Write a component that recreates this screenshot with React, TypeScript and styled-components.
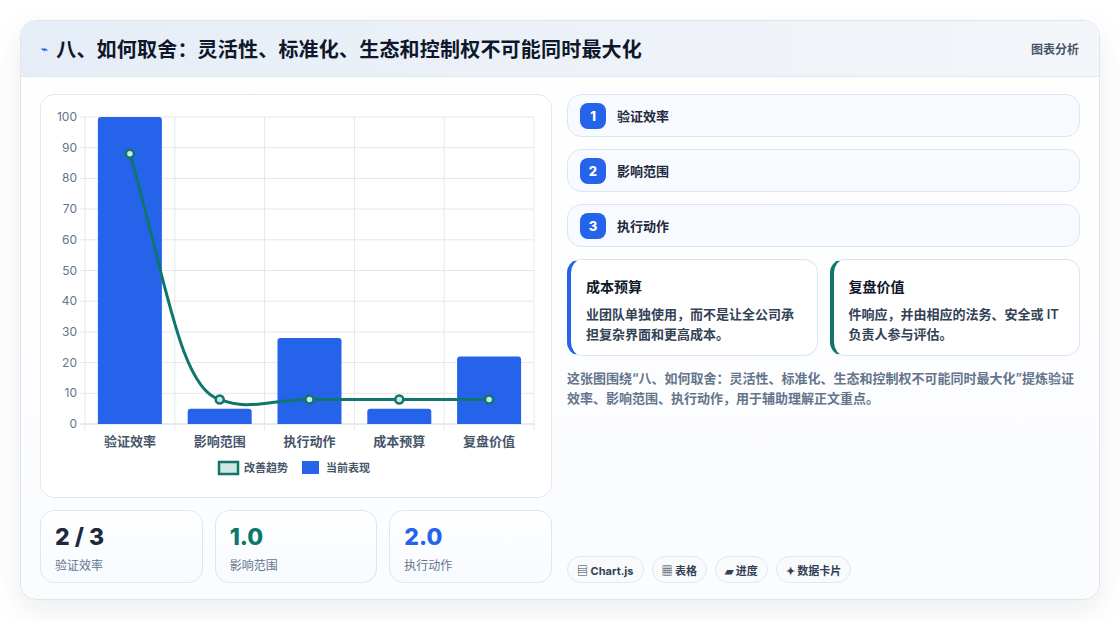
import styled, { createGlobalStyle } from 'styled-components';

const Global = createGlobalStyle`
  html, body { margin: 0; padding: 0; background: #ffffff; }
  body { font-family: Inter, "Noto Sans CJK SC", sans-serif; color: #0f172a; }
  * { box-sizing: border-box; }
`;

const Page = styled.div`
  width: 1120px;
  height: 620px;
  padding: 20px;
`;

const Card = styled.div`
  width: 1080px;
  height: 580px;
  border: 1px solid #dfe5ee;
  border-radius: 16px;
  background: linear-gradient(180deg, #ffffff, #fbfcfe);
  box-shadow: 0 10px 30px rgba(15, 23, 42, 0.08);
  overflow: hidden;
  display: flex;
  flex-direction: column;
`;

const Header = styled.div`
  height: 56px;
  flex-shrink: 0;
  display: flex;
  align-items: center;
  justify-content: space-between;
  padding: 0 20px;
  background: linear-gradient(90deg, #e6edf6, #f3f6fa);
  border-bottom: 1px solid #e2e8f0;
`;

const Title = styled.h1`
  margin: 0;
  font-size: 20px;
  font-weight: 700;
  color: #0f172a;
  display: flex;
  align-items: center;
  gap: 8px;
  letter-spacing: 0.2px;
`;

const Bolt = styled.span`
  color: #2563eb;
  font-size: 11px;
`;

const HeaderTag = styled.span`
  font-size: 12px;
  color: #475569;
  font-weight: 600;
`;

const Body = styled.div`
  flex: 1;
  display: grid;
  grid-template-columns: 512px 513px;
  gap: 15px;
  padding: 17px 19px 19px 19px;
`;

const Col = styled.div`
  display: flex;
  flex-direction: column;
  gap: 12px;
`;

const ChartCard = styled.div`
  height: 404px;
  border: 1px solid #e2e8f0;
  border-radius: 14px;
  background: #fff;
`;

const StatRow = styled.div`
  display: grid;
  grid-template-columns: repeat(3, 1fr);
  gap: 12px;
`;

const Stat = styled.div`
  height: 73px;
  border: 1px solid #dde6f2;
  border-radius: 14px;
  background: linear-gradient(180deg, #ffffff, #f7faff);
  padding: 12px 14px;
`;

const StatValue = styled.div<{ $color: string }>`
  font-size: 23px;
  font-weight: 800;
  color: ${p => p.$color};
  line-height: 28px;
`;

const StatLabel = styled.div`
  font-size: 12px;
  color: #64748b;
  margin-top: 5px;
`;

const Item = styled.div`
  height: 43px;
  border: 1px solid #dbe6f5;
  border-radius: 14px;
  background: #f7faff;
  display: flex;
  align-items: center;
  gap: 11px;
  padding: 0 12px;
  font-size: 13px;
  font-weight: 600;
  color: #1e293b;
`;

const Num = styled.span`
  width: 26px;
  height: 26px;
  border-radius: 8px;
  background: #2563eb;
  color: #fff;
  font-size: 13px;
  font-weight: 800;
  display: flex;
  align-items: center;
  justify-content: center;
`;

const InfoRow = styled.div`
  display: grid;
  grid-template-columns: 1fr 1fr;
  gap: 12px;
`;

const Info = styled.div<{ $accent: string }>`
  height: 97px;
  border: 1px solid #dbe6f5;
  border-left: 4px solid ${p => p.$accent};
  border-radius: 14px;
  background: #fff;
  padding: 16px 16px 0 15px;
`;

const InfoTitle = styled.div`
  font-size: 14px;
  font-weight: 700;
  color: #0f172a;
  margin-bottom: 8px;
`;

const InfoText = styled.div`
  font-size: 13px;
  font-weight: 600;
  line-height: 20px;
  color: #334155;
`;

const Summary = styled.p`
  margin: 0;
  font-size: 13px;
  font-weight: 600;
  line-height: 20px;
  color: #64748b;
`;

const Tags = styled.div`
  margin-top: auto;
  display: flex;
  gap: 8px;
`;

const Tag = styled.span`
  height: 27px;
  padding: 0 9px;
  border: 1px solid #e2e8f0;
  border-radius: 14px;
  background: #f8fafc;
  font-size: 11px;
  font-weight: 700;
  color: #334155;
  display: flex;
  align-items: center;
  gap: 3px;
`;

const vals = [100, 5, 28, 5, 22];
const labels = ['验证效率', '影响范围', '执行动作', '成本预算', '复盘价值'];
const L = 44, R = 493, T = 22, B = 329;
const cw = (R - L) / 5;
const y = (v: number) => B - v * ((B - T) / 100);

function Chart() {
  const cx = (i: number) => L + cw * (i + 0.5);
  const lv = [88, 8, 8, 8, 8];
  const pts = lv.map((v, i) => [cx(i), y(v)]);
  const d = `M${pts[0][0]},${pts[0][1]} C${pts[0][0] + 35},${pts[0][1] + 120} ${pts[1][0] - 40},${pts[1][1] - 10} ${pts[1][0]},${pts[1][1]} C${pts[1][0] + 30},${pts[1][1] + 12} ${pts[2][0] - 40},${pts[2][1]} ${pts[2][0]},${pts[2][1]} L${pts[4][0]},${pts[4][1]}`;
  return (
    <svg width="510" height="402" viewBox="0 0 510 402">
      {Array.from({ length: 11 }, (_, k) => (
        <g key={k}>
          <line x1={L - 5} x2={R} y1={y(k * 10)} y2={y(k * 10)} stroke={k === 0 ? '#cbd5e1' : '#e5e7eb'} />
          <text x={L - 8} y={y(k * 10) + 4} fontSize="12" fill="#64748b" textAnchor="end" fontFamily="Inter, sans-serif">{k * 10}</text>
        </g>
      ))}
      {Array.from({ length: 6 }, (_, k) => (
        <line key={k} x1={L + cw * k} x2={L + cw * k} y1={T} y2={B + 6} stroke="#e5e7eb" />
      ))}
      {vals.map((v, i) => (
        <path key={i} d={`M${cx(i) - 32},${B} V${y(v) + 3} Q${cx(i) - 32},${y(v)} ${cx(i) - 29},${y(v)} H${cx(i) + 29} Q${cx(i) + 32},${y(v)} ${cx(i) + 32},${y(v) + 3} V${B} Z`} fill="#2563eb" />
      ))}
      <path d={d} fill="none" stroke="#0f766e" strokeWidth="3" />
      {pts.map((p, i) => (
        <circle key={i} cx={p[0]} cy={p[1]} r="4" fill="#d1e7e3" stroke="#0f766e" strokeWidth="2.5" />
      ))}
      {labels.map((t, i) => (
        <text key={t} x={cx(i)} y={351} fontSize="13" fill="#475569" textAnchor="middle" fontWeight="600" fontFamily='"Noto Sans CJK SC", sans-serif'>{t}</text>
      ))}
      <rect x="178" y="367" width="19" height="12" fill="#d1e7e3" stroke="#0f766e" strokeWidth="2.5" />
      <text x="203" y="377" fontSize="11" fill="#475569" fontWeight="600" fontFamily='"Noto Sans CJK SC", sans-serif'>改善趋势</text>
      <rect x="261" y="366" width="17" height="13" fill="#2563eb" />
      <text x="285" y="377" fontSize="11" fill="#475569" fontWeight="600" fontFamily='"Noto Sans CJK SC", sans-serif'>当前表现</text>
    </svg>
  );
}

export default function App() {
  return (
    <Page>
      <Global />
      <Card>
        <Header>
          <Title><Bolt>⌁</Bolt>八、如何取舍：灵活性、标准化、生态和控制权不可能同时最大化</Title>
          <HeaderTag>图表分析</HeaderTag>
        </Header>
        <Body>
          <Col>
            <ChartCard><Chart /></ChartCard>
            <StatRow>
              <Stat><StatValue $color="#1e293b">2 / 3</StatValue><StatLabel>验证效率</StatLabel></Stat>
              <Stat><StatValue $color="#0f766e">1.0</StatValue><StatLabel>影响范围</StatLabel></Stat>
              <Stat><StatValue $color="#2563eb">2.0</StatValue><StatLabel>执行动作</StatLabel></Stat>
            </StatRow>
          </Col>
          <Col>
            <Item><Num>1</Num>验证效率</Item>
            <Item><Num>2</Num>影响范围</Item>
            <Item><Num>3</Num>执行动作</Item>
            <InfoRow>
              <Info $accent="#2563eb">
                <InfoTitle>成本预算</InfoTitle>
                <InfoText>业团队单独使用，而不是让全公司承担复杂界面和更高成本。</InfoText>
              </Info>
              <Info $accent="#0f766e">
                <InfoTitle>复盘价值</InfoTitle>
                <InfoText>件响应，并由相应的法务、安全或 IT 负责人参与评估。</InfoText>
              </Info>
            </InfoRow>
            <Summary>这张图围绕“八、如何取舍：灵活性、标准化、生态和控制权不可能同时最大化”提炼验证效率、影响范围、执行动作，用于辅助理解正文重点。</Summary>
            <Tags>
              <Tag>▤ Chart.js</Tag>
              <Tag>▦ 表格</Tag>
              <Tag>▰ 进度</Tag>
              <Tag>✦ 数据卡片</Tag>
            </Tags>
          </Col>
        </Body>
      </Card>
    </Page>
  );
}
